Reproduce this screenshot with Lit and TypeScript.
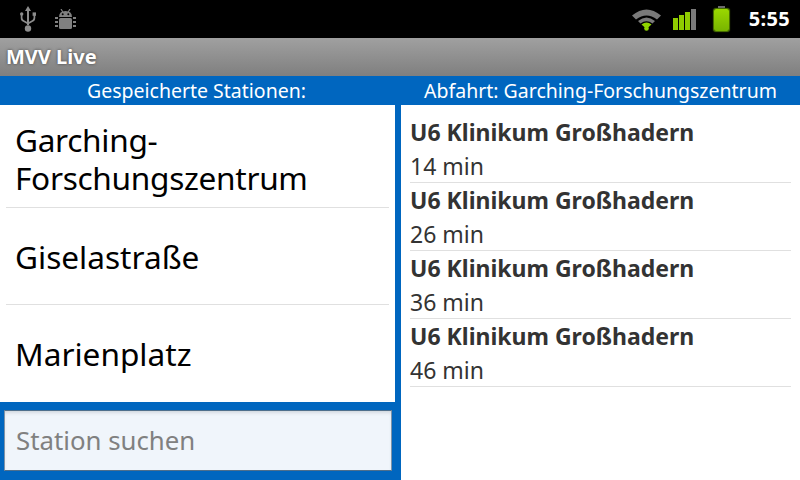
import { LitElement, html, css, svg } from 'lit';
import { customElement } from 'lit/decorators.js';

const stations = ['Garching-\nForschungszentrum', 'Giselastraße', 'Marienplatz'];
const departures = ['14 min', '26 min', '36 min', '46 min'];

const usbIcon = svg`<svg class="icon" width="16" height="26" viewBox="0 0 16 26">
  <path d="M8 0 L11 5 H9 V19 H7 V5 H5 Z" fill="#8c8c8c"/>
  <circle cx="8" cy="22.5" r="3.2" fill="#8c8c8c"/>
  <path d="M1.6 9 V12 Q1.6 14.5 4.5 15.5 L8 17.5 L11.5 15.5 Q14.4 14.5 14.4 12 V9" fill="none" stroke="#8c8c8c" stroke-width="1.7"/>
  <circle cx="1.7" cy="8" r="1.7" fill="#8c8c8c"/>
  <rect x="12.6" y="6.4" width="3.4" height="3.4" fill="#8c8c8c"/>
</svg>`;

const droidIcon = svg`<svg class="icon" width="21" height="21" viewBox="0 0 21 21">
  <path d="M6 0 L7.8 3 M15 0 L13.2 3" stroke="#808080" stroke-width="1.2"/>
  <path d="M4 8 Q4 2 10.5 2 Q17 2 17 8 Z" fill="#808080"/>
  <rect x="4" y="9" width="13" height="11" rx="1.5" fill="#808080"/>
  <g fill="#808080">
    <rect x="0" y="8" width="3" height="2"/><rect x="0" y="12" width="3" height="2"/><rect x="0" y="16" width="3" height="2"/>
    <rect x="18" y="8" width="3" height="2"/><rect x="18" y="12" width="3" height="2"/><rect x="18" y="16" width="3" height="2"/>
  </g>
  <circle cx="7.7" cy="5.3" r="1" fill="#000"/><circle cx="13.3" cy="5.3" r="1" fill="#000"/>
</svg>`;

const wifiIcon = svg`<svg class="icon" width="29" height="23" viewBox="0 0 29 23">
  <path d="M0 7.5 Q14.5 -4.5 29 7.5 L25 11.5 Q14.5 3.5 4 11.5 Z" fill="#7a7a7a"/>
  <path d="M6 13 Q14.5 6 23 13 L20.5 15.5 Q14.5 11 8.5 15.5 Z" fill="#7a7a7a"/>
  <path d="M9.5 16.5 Q14.5 12.5 19.5 16.5 L14.5 21 Z" fill="#8fd400"/>
  <circle cx="14.5" cy="20.5" r="2.3" fill="#8fd400"/>
</svg>`;

const signalBars = [
  { h: 12, c: '#8fcc00' },
  { h: 15, c: '#8fcc00' },
  { h: 18, c: '#8fcc00' },
  { h: 21, c: '#7a7a7a' },
];

@customElement('app-root')
export class AppRoot extends LitElement {
  static styles = css`
    :host {
      display: flex;
      flex-direction: column;
      width: 800px;
      height: 480px;
      overflow: hidden;
      font-family: 'Noto Sans', 'Open Sans', sans-serif;
      background: #0066bf;
    }
    .status {
      height: 38px;
      background: #000;
      display: flex;
      align-items: center;
      padding: 0 10px 0 20px;
    }
    .icon { display: block; }
    .status .droid { margin-left: 19px; }
    .spacer { flex: 1; }
    .bars {
      display: flex;
      align-items: flex-end;
      gap: 1px;
      height: 21px;
      margin: 1px 0 0 12px;
    }
    .bars span { width: 5px; display: block; }
    .battery {
      width: 15px;
      height: 22px;
      margin: 2px 20px 0 18px;
      border-radius: 2px;
      background: linear-gradient(#9ad800, #78b400);
      box-shadow: 0 0 1px 1px #4f7a00;
      position: relative;
    }
    .battery::before {
      content: '';
      position: absolute;
      top: -3px;
      left: 4px;
      width: 7px;
      height: 2px;
      background: #6a6a6a;
    }
    .clock {
      color: #fff;
      font-size: 20px;
      font-weight: 700;
      line-height: 38px;
      letter-spacing: 0.3px;
    }
    .title {
      height: 38px;
      box-sizing: border-box;
      background: linear-gradient(#a0a0a0, #7f7f7f);
      color: #fff;
      font-size: 20px;
      font-weight: 700;
      line-height: 37px;
      padding-left: 6px;
      text-shadow: 0 0 3px #444;
    }
    .panes {
      flex: 1;
      display: grid;
      grid-template-columns: 395px 399px;
      column-gap: 6px;
      min-height: 0;
    }
    .pane {
      display: flex;
      flex-direction: column;
      min-height: 0;
    }
    .head {
      height: 29px;
      color: #fff;
      font-size: 19.5px;
      line-height: 30px;
      text-align: center;
      white-space: nowrap;
    }
    .pane:first-child .head { padding-right: 2px; }
    .stations { background: #fff; }
    .station {
      box-sizing: border-box;
      height: 97px;
      display: flex;
      align-items: center;
      margin: 0 6px;
      padding: 2px 0 0 9px;
      font-size: 31.6px;
      line-height: 38px;
      color: #000;
      white-space: pre-line;
      border-bottom: 1px solid #e0e0e0;
    }
    .station:first-child { height: 103px; padding-top: 6px; letter-spacing: -0.3px; }
    .station:last-child { border-bottom: none; padding-top: 1px; }
    .search {
      flex: 1;
      padding: 8px 3px 9px 4px;
      display: flex;
    }
    .input {
      flex: 1;
      box-sizing: border-box;
      display: flex;
      align-items: center;
      padding: 0 0 2px 11px;
      font-size: 25.8px;
      color: #808080;
      background: #f0f5fb;
      border: 1px solid #7f93a8;
      border-top-color: #4f6f8c;
      border-bottom-color: #4f6f8c;
      box-shadow: inset 0 3px 4px -2px #c6ccd3;
    }
    .departures {
      flex: 1;
      background: #fff;
      padding: 10px 9px 0 9px;
    }
    .dep {
      box-sizing: border-box;
      height: 68px;
      border-bottom: 1px solid #e0e0e0;
      color: #333;
      font-size: 23px;
    }
    .dep b { display: block; font-weight: 700; line-height: 35px; }
    .dep span { display: block; line-height: 32px; }
  `;

  render() {
    return html`
      <div class="status">
        ${usbIcon}
        <span class="droid">${droidIcon}</span>
        <span class="spacer"></span>
        ${wifiIcon}
        <div class="bars">
          ${signalBars.map(b => html`<span style="height:${b.h}px;background:${b.c}"></span>`)}
        </div>
        <div class="battery"></div>
        <div class="clock">5:55</div>
      </div>
      <div class="title">MVV Live</div>
      <div class="panes">
        <div class="pane">
          <div class="head">Gespeicherte Stationen:</div>
          <div class="stations">
            ${stations.map(s => html`<div class="station">${s}</div>`)}
          </div>
          <div class="search"><div class="input">Station suchen</div></div>
        </div>
        <div class="pane">
          <div class="head">Abfahrt: Garching-Forschungszentrum</div>
          <div class="departures">
            ${departures.map(d => html`<div class="dep"><b>U6 Klinikum Großhadern</b><span>${d}</span></div>`)}
          </div>
        </div>
      </div>
    `;
  }
}
